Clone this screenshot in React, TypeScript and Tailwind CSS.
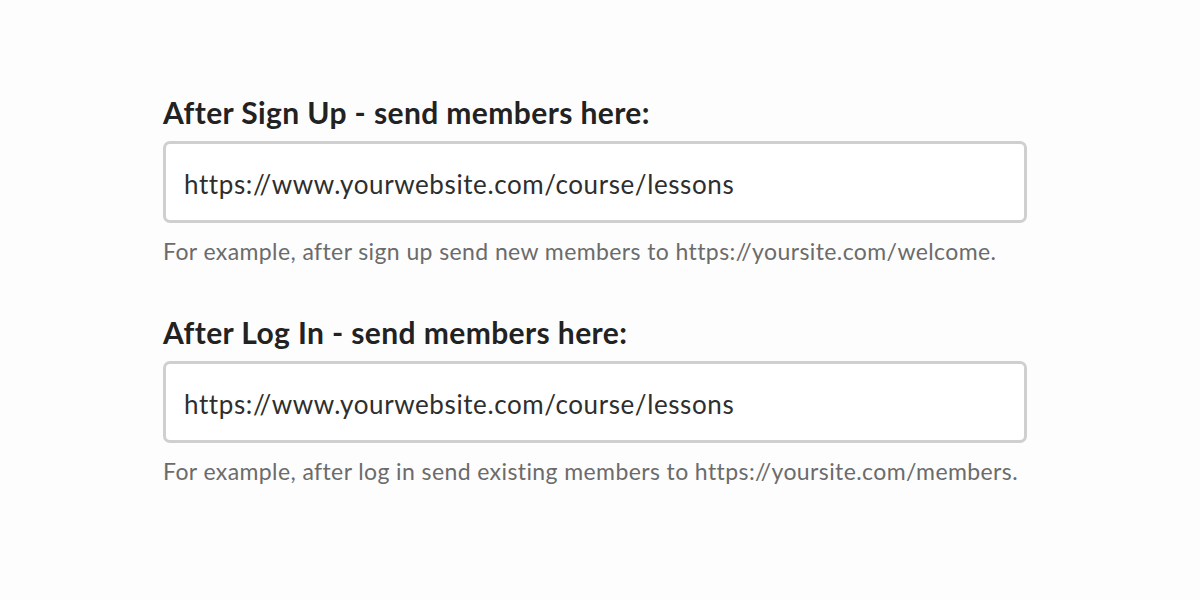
const fields = [
  {
    label: "After Sign Up - send members here:",
    value: "https://www.yourwebsite.com/course/lessons",
    hint: "For example, after sign up send new members to https://yoursite.com/welcome.",
  },
  {
    label: "After Log In - send members here:",
    value: "https://www.yourwebsite.com/course/lessons",
    hint: "For example, after log in send existing members to https://yoursite.com/members.",
  },
];

export default function App() {
  return (
    <div className="w-[1200px] h-[600px] bg-[#fdfdfd] font-['Lato',sans-serif] pt-[92px] pl-[163px]">
      <div className="w-[864px] flex flex-col gap-[46px]">
        {fields.map((f, i) => (
          <div key={i} className="flex flex-col">
            <label className="text-[30px] leading-[40px] tracking-[0.4px] font-bold text-[#222] mb-[9px]">{f.label}</label>
            <input
              readOnly
              value={f.value}
              className="h-[82px] rounded-[7px] border-[3px] border-[#cfcfcf] bg-white px-[18px] pt-[3px] text-[26px] tracking-[0.6px] text-[#2e2e2e] outline-none"
            />
            <p className="mt-[13px] text-[23px] leading-[30px] tracking-[0.4px] text-[#6b6b6b]">{f.hint}</p>
          </div>
        ))}
      </div>
    </div>
  );
}
